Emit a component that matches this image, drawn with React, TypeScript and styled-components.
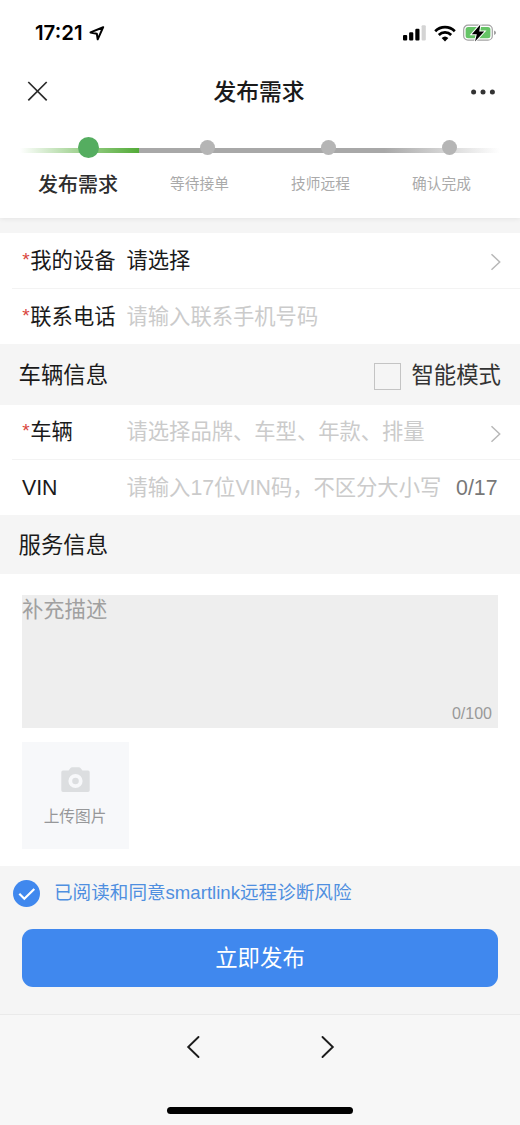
import React from "react";
import styled, { createGlobalStyle } from "styled-components";

const GlobalStyle = createGlobalStyle`
  * { box-sizing: border-box; }
  body {
    margin: 0;
    background: #f5f5f5;
    font-family: "Liberation Sans", "Noto Sans CJK SC", sans-serif;
    color: #1a1a1a;
  }
  svg { display: block; flex: none; }
`;

const Page = styled.div`
  width: 520px;
  height: 1125px;
  display: flex;
  flex-direction: column;
  background: #f5f5f5;
  overflow: hidden;
`;

const Header = styled.header`
  height: 218px;
  flex: none;
  background: #fff;
  box-shadow: 0 1px 5px rgba(0, 0, 0, 0.07);
`;

const StatusBar = styled.div`
  height: 62px;
  padding: 4px 24px 0 35px;
  display: flex;
  align-items: center;
  justify-content: space-between;
`;

const Clock = styled.div`
  display: flex;
  align-items: center;
  gap: 6px;
  font: 600 20.4px/24px Inter, sans-serif;
  color: #000;
`;

const StatusIcons = styled.div`
  display: flex;
  align-items: center;
  gap: 7.5px;
`;

const NavBar = styled.div`
  height: 60px;
  padding: 0 25px 0 27px;
  display: grid;
  grid-template-columns: 60px 1fr 64px;
  align-items: center;
`;

const NavTitle = styled.h1`
  margin: 0;
  text-align: center;
  font-size: 22.8px;
  line-height: 32px;
  font-weight: 500;
`;

const NavEnd = styled.div`
  display: flex;
  justify-content: flex-end;
`;

const Steps = styled.ol`
  position: relative;
  list-style: none;
  margin: 0;
  padding: 14px 18px 0;
  display: grid;
  grid-template-columns: repeat(4, 121px);
`;

const Track = styled.div<{ $tone: "done" | "todo" }>`
  position: absolute;
  top: 25.5px;
  height: 5.5px;
  left: ${(p) => (p.$tone === "done" ? 20 : 139)}px;
  width: ${(p) => (p.$tone === "done" ? 119 : 361)}px;
  background: ${(p) =>
    p.$tone === "done"
      ? "linear-gradient(90deg, rgba(83,171,56,0), #a9d69b 45%, #53ab38)"
      : "linear-gradient(90deg, #a8a8a8 68%, rgba(168,168,168,0))"};
`;

const Step = styled.li`
  position: relative;
  display: flex;
  flex-direction: column;
  align-items: center;
`;

const DotBox = styled.div<{ $active?: boolean }>`
  height: 22px;
  display: flex;
  align-items: center;
  padding-left: ${(p) => (p.$active ? 19 : 16)}px;
`;

const Dot = styled.i<{ $active?: boolean }>`
  width: ${(p) => (p.$active ? 21 : 15)}px;
  height: ${(p) => (p.$active ? 21 : 15)}px;
  border-radius: 50%;
  background: ${(p) => (p.$active ? "#55ad60" : "#b5b5b5")};
`;

const StepLabel = styled.span<{ $active?: boolean }>`
  margin: ${(p) => (p.$active ? "12px 1px 0 0" : "11px 0 0")};
  line-height: 30px;
  white-space: nowrap;
  font-size: ${(p) => (p.$active ? 20 : 14.7)}px;
  font-weight: ${(p) => (p.$active ? 500 : 400)};
  color: ${(p) => (p.$active ? "#2d2d2d" : "#aaa")};
`;

const Group = styled.section<{ $gap?: number }>`
  flex: none;
  margin-top: ${(p) => p.$gap ?? 0}px;
  background: #fff;
`;

const Row = styled.div<{ $height: number; $line?: boolean }>`
  height: ${(p) => p.$height}px;
  margin-left: 12px;
  padding: 0 19px 0 10px;
  display: flex;
  align-items: center;
  border-bottom: ${(p) => (p.$line ? "1px solid #f3f3f3" : "0")};
  font-size: 21.3px;
  line-height: 32px;
  white-space: nowrap;
`;

const RowLabel = styled.div`
  width: 104.5px;
  flex: none;
  display: flex;
`;

const Required = styled.span`
  width: 8.3px;
  padding-left: 0.3px;
  line-height: 29px;
  font-size: 19px;
  color: #d9453d;
`;

const RowValue = styled.div<{ $empty?: boolean }>`
  flex: 1;
  color: ${(p) => (p.$empty ? "#cbcbcb" : "#1a1a1a")};
`;

const Counter = styled.span`
  margin-right: 3.5px;
  color: #777;
`;

const SectionBar = styled.div<{ $height: number }>`
  height: ${(p) => p.$height}px;
  flex: none;
  padding: 2px 19px 0 18.5px;
  display: flex;
  align-items: center;
  justify-content: space-between;
  font-size: 22.4px;
  line-height: 32px;
`;

const CheckLabel = styled.label`
  display: flex;
  align-items: center;
  gap: 10px;
  padding-top: 1px;
  color: #333;
`;

const CheckBox = styled.i`
  width: 27px;
  height: 27px;
  border: 1px solid #c4c4c4;
`;

const Details = styled.section`
  height: 292px;
  flex: none;
  padding: 21px 22px 0;
  background: #fff;
`;

const TextBox = styled.div`
  height: 133px;
  padding: 1px 6px 2px 0;
  display: flex;
  flex-direction: column;
  justify-content: space-between;
  background: #eee;
  font-size: 21.3px;
  line-height: 28px;
  color: #a0a0a0;
`;

const TextCount = styled.span`
  align-self: flex-end;
  font-size: 16px;
  line-height: 24px;
  color: #999;
`;

const Upload = styled.div`
  width: 107px;
  height: 107px;
  margin-top: 14px;
  padding: 25px 1px 0 0;
  display: flex;
  flex-direction: column;
  align-items: center;
  gap: 12px;
  background: #f7f8fa;
  font-size: 15.7px;
  line-height: 24px;
  color: #969799;
`;

const Submit = styled.div`
  height: 148px;
  flex: none;
  padding: 13px 22px 0;
`;

const Agreement = styled.div`
  height: 28px;
  margin-left: -9px;
  display: flex;
  align-items: center;
  gap: 14px;
  font-size: 18.6px;
  line-height: 28px;
  color: #4f8fe0;
  white-space: nowrap;
`;

const SubmitButton = styled.button`
  display: block;
  width: 100%;
  height: 58.5px;
  margin-top: 21.5px;
  padding: 0 0 3px;
  border: 0;
  border-radius: 11px;
  background: #4088ee;
  color: #fff;
  font: inherit;
  font-size: 22.4px;
`;

const BrowserBar = styled.nav`
  flex: 1;
  border-top: 1px solid #eaeaea;
  background: #f7f7f7;
  display: flex;
  flex-direction: column;
  align-items: center;
  justify-content: space-between;
  padding: 20px 0 11px;
`;

const Arrows = styled.div`
  display: flex;
  gap: 121px;
`;

const HomeIndicator = styled.div`
  width: 186px;
  height: 7px;
  border-radius: 4px;
  background: #000;
`;

const RowChevron = styled.span`
  padding-top: 3px;
  margin-right: -1px;
`;

const ChevronIcon = () => (
  <svg width="12" height="18" viewBox="0 0 12 18" fill="none" stroke="#b8b8b8" strokeWidth="1.5">
    <path d="M1.500 1.200 9.700 9l-8.200 7.800" />
  </svg>
);

const LocationIcon = () => (
  <svg width="16" height="15" viewBox="0 0 16 15" fill="none" stroke="#000" strokeWidth="2" strokeLinejoin="round">
    <path d="M14.200 1.200 1.500 6.400l6.300 1.300.9 5.600z" />
  </svg>
);

const SignalIcon = () => (
  <svg width="23" height="16" viewBox="0 0 23 16">
    <rect x="0" y="10" width="4.2" height="5.5" rx="1.1" />
    <rect x="6.1" y="7.3" width="4.2" height="8.2" rx="1.1" />
    <rect x="12.3" y="3.8" width="4.2" height="11.7" rx="1.1" />
    <rect x="18.6" y="0.2" width="4.2" height="15.3" rx="1.1" fill="#d4d4d4" />
  </svg>
);

const WifiIcon = () => (
  <svg width="22" height="17" viewBox="0 0 22 17" fill="none" stroke="#000" strokeWidth="2.7">
    <path d="M1.2 6.2a14 14 0 0 1 19.6 0" />
    <path d="M4.8 10a8.8 8.8 0 0 1 12.4 0" />
    <path d="M11 16.6 7.6 13.1a5 5 0 0 1 6.8 0z" fill="#000" stroke="none" />
  </svg>
);

const BatteryIcon = () => (
  <svg width="33" height="18" viewBox="0 0 33 18">
    <rect x="0.7" y="1.2" width="28.6" height="15" rx="4.3" fill="#fff" stroke="#a2a2a2" strokeWidth="1.2" />
    <rect x="2.6" y="3.1" width="24.8" height="11.2" rx="2.5" fill="#65c466" />
    <path d="M31 6.6c1.4.5 2 1.2 2 2.2s-.6 1.7-2 2.2z" fill="#a2a2a2" />
    <path
      d="M17.400.4 8.800 10.200h5L12 17.400 21.200 7.600h-5z"
      stroke="#fff"
      strokeWidth="2"
      paintOrder="stroke"
    />
  </svg>
);

const CloseIcon = () => (
  <svg width="21" height="22" viewBox="0 0 21 22" stroke="#2b2b2b" strokeWidth="1.7">
    <path d="M1.300 1 19.700 19.400M19.700 1 1.300 19.400" />
  </svg>
);

const MoreIcon = () => (
  <svg width="24" height="6" viewBox="0 0 24 6" fill="#333">
    <circle cx="2.6" cy="3" r="2.5" />
    <circle cx="12" cy="3" r="2.5" />
    <circle cx="21.4" cy="3" r="2.5" />
  </svg>
);

const CameraIcon = () => (
  <svg width="29" height="26" viewBox="0 0 29 26">
    <path
      d="M2 3.600h5.600L9.300 1.200Q10 .3 11.200.3h6.600q1.200 0 1.900.9l1.700 2.400H27q1.700 0 1.700 1.700v18q0 1.700-1.700 1.700H2Q.3 25 .3 23.300v-18Q.3 3.600 2 3.600z"
      fill="#dcdee0"
    />
    <circle cx="14.5" cy="14" r="5.2" fill="none" stroke="#f7f8fa" strokeWidth="3.8" />
  </svg>
);

const CheckedIcon = () => (
  <svg width="27" height="27" viewBox="0 0 27 27" fill="none">
    <circle cx="13.5" cy="13.5" r="13.5" fill="#4088ee" />
    <path d="m6.300 13.800 5 4.900L21.300 9" stroke="#fff" strokeWidth="2.2" />
  </svg>
);

const ArrowIcon = ({ d }: { d: string }) => (
  <svg width="14" height="24" viewBox="0 0 14 24" fill="none" stroke="#1c1c1c" strokeWidth="1.9" strokeLinecap="round">
    <path d={d} />
  </svg>
);

const STEPS = ["发布需求", "等待接单", "技师远程", "确认完成"];

export default function App() {
  return (
    <>
      <GlobalStyle />
      <Page>
        <Header>
          <StatusBar>
            <Clock>
              17:21
              <LocationIcon />
            </Clock>
            <StatusIcons>
              <SignalIcon />
              <WifiIcon />
              <BatteryIcon />
            </StatusIcons>
          </StatusBar>
          <NavBar>
            <CloseIcon />
            <NavTitle>发布需求</NavTitle>
            <NavEnd>
              <MoreIcon />
            </NavEnd>
          </NavBar>
          <Steps>
            <Track $tone="done" />
            <Track $tone="todo" />
            {STEPS.map((label, i) => (
              <Step key={label}>
                <DotBox $active={i === 0}>
                  <Dot $active={i === 0} />
                </DotBox>
                <StepLabel $active={i === 0}>{label}</StepLabel>
              </Step>
            ))}
          </Steps>
        </Header>

        <Group $gap={15}>
          <Row $height={56} $line>
            <RowLabel>
              <Required>*</Required>我的设备
            </RowLabel>
            <RowValue>请选择</RowValue>
            <RowChevron>
              <ChevronIcon />
            </RowChevron>
          </Row>
          <Row $height={55}>
            <RowLabel>
              <Required>*</Required>联系电话
            </RowLabel>
            <RowValue $empty>请输入联系手机号码</RowValue>
          </Row>
        </Group>

        <SectionBar $height={61}>
          车辆信息
          <CheckLabel>
            <CheckBox />
            智能模式
          </CheckLabel>
        </SectionBar>

        <Group>
          <Row $height={55} $line>
            <RowLabel>
              <Required>*</Required>车辆
            </RowLabel>
            <RowValue $empty>请选择品牌、车型、年款、排量</RowValue>
            <RowChevron>
              <ChevronIcon />
            </RowChevron>
          </Row>
          <Row $height={55}>
            <RowLabel>VIN</RowLabel>
            <RowValue $empty>请输入17位VIN码，不区分大小写</RowValue>
            <Counter>0/17</Counter>
          </Row>
        </Group>

        <SectionBar $height={59}>服务信息</SectionBar>

        <Details>
          <TextBox>
            补充描述
            <TextCount>0/100</TextCount>
          </TextBox>
          <Upload>
            <CameraIcon />
            上传图片
          </Upload>
        </Details>

        <Submit>
          <Agreement>
            <CheckedIcon />
            已阅读和同意smartlink远程诊断风险
          </Agreement>
          <SubmitButton>立即发布</SubmitButton>
        </Submit>

        <BrowserBar>
          <Arrows>
            <ArrowIcon d="M12.500 2 2.200 12l10.300 10" />
            <ArrowIcon d="M1.500 2 11.800 12 1.500 22" />
          </Arrows>
          <HomeIndicator />
        </BrowserBar>
      </Page>
    </>
  );
}
